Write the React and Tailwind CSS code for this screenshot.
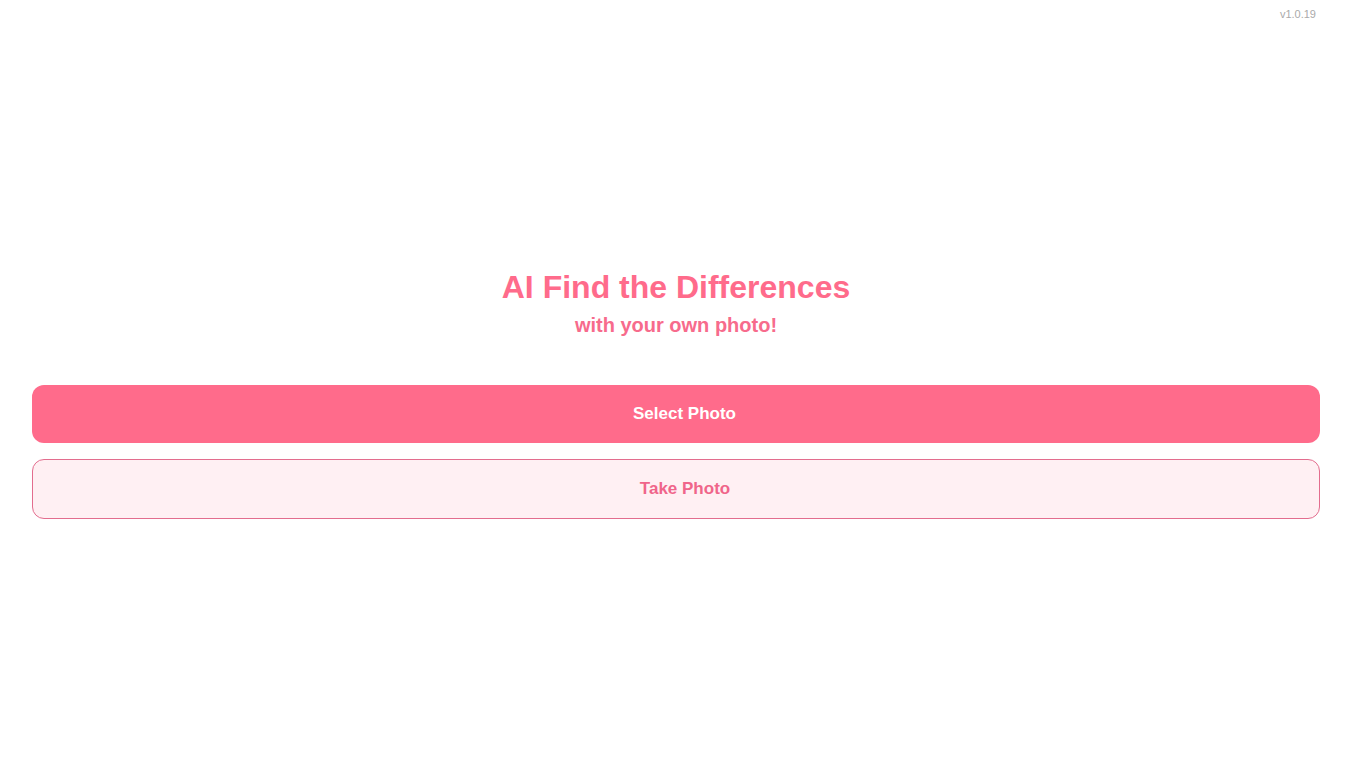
import React from "react";

export default function App() {
  return (
    <div
      className="relative min-h-screen bg-white flex flex-col justify-center pt-[27px] px-8"
      style={{ fontFamily: '"Liberation Sans", Arial, sans-serif' }}
    >
      {/* version tag */}
      <div className="absolute top-[6px] right-[36px] text-[11px] text-[#aaaaaa]">v1.0.19</div>

      <div className="text-center">
        <h1 className="text-[32px] leading-[38px] font-bold text-[#ff6b8b]">AI Find the Differences</h1>
        <p className="mt-[7px] text-[20px] leading-[24px] font-bold text-[#f76b8c]">with your own photo!</p>
      </div>

      <div className="mt-[48px] flex flex-col gap-4">
        <button className="h-[58px] w-full rounded-xl bg-[#ff6b8b] pl-[17px] text-white text-[17px] font-bold">
          Select Photo
        </button>
        <button className="h-[60px] w-full rounded-xl border border-[#e36d8e] bg-[#fff0f3] pl-[18px] text-[#f0658a] text-[17px] font-bold">
          Take Photo
        </button>
      </div>
    </div>
  );
}
